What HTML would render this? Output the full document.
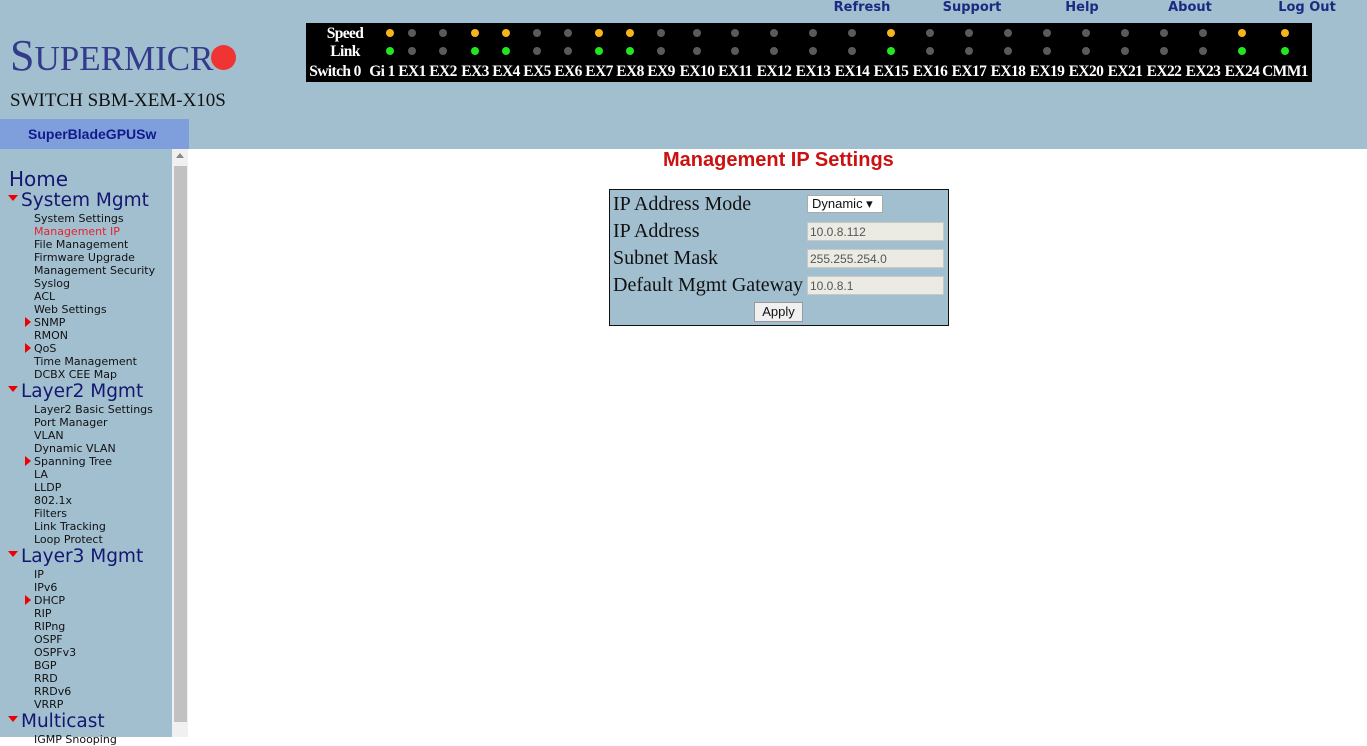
<!DOCTYPE html>
<html><head><meta charset="utf-8"><style>
body{margin:0;width:1367px;height:737px;overflow:hidden;background:#fff;position:relative;font-family:"Liberation Sans",sans-serif}
.a{position:absolute}
#top{left:0;top:0;width:1367px;height:149px;background:#a2bfd0}
#side{left:0;top:149px;width:172px;height:588px;background:#a2bfd0}
#track{left:172px;top:149px;width:16px;height:588px;background:#f0f0f0}
#thumb{left:174px;top:166px;width:13px;height:556px;background:#c1c1c1}
.lnk{top:0;font:bold 13px "DejaVu Sans",sans-serif;color:#1b2a80;transform:translateX(-50%);white-space:nowrap}
#led{left:306px;top:23px;width:1006px;height:59px;background:#000}
.d{width:8px;height:8px;border-radius:50%;margin:-4px 0 0 -4px;background:#5a5a5a}
.o{background:#f9b41a}.g{background:#1ee81e}
.lb{font:bold 15.5px "Liberation Serif",serif;letter-spacing:-0.6px;color:#fff;transform:translateX(-50%);white-space:nowrap;top:63px}
.m{font-family:"DejaVu Sans",sans-serif;white-space:nowrap;color:#111}
.it{left:34px;font-size:11px;line-height:13px}
.h{left:21px;font-size:18.5px;color:#15166f;line-height:22px}
.tri{width:0;height:0;border-left:5px solid transparent;border-right:5px solid transparent;border-top:6px solid #e00;left:8px}
.rt{width:0;height:0;border-top:5px solid transparent;border-bottom:5px solid transparent;border-left:6px solid #e00;left:25px}
.fl{font:20px "Liberation Serif",serif;color:#111;left:613px}
.in{left:807px;width:137px;height:19px;background:#ebebe4;border:1px solid #c8c8c8;font:12px "Liberation Sans",sans-serif;color:#555;line-height:18px;padding-left:2px;box-sizing:border-box}
</style></head><body>
<div id="top" class="a"></div>
<div id="side" class="a"></div>
<div id="track" class="a"></div>
<div id="thumb" class="a"></div>
<div class="a" style="left:176px;top:153px;width:0;height:0;border-left:4px solid transparent;border-right:4px solid transparent;border-bottom:5px solid #888"></div>

<div class="a" style="left:10px;top:31px;font:44px 'Liberation Serif',serif;color:#333b8a;line-height:50px"><span style="font-size:44px">S</span><span style="font-size:35px">UPERMICR</span></div>
<div class="a" style="left:211px;top:45px;width:25px;height:25px;border-radius:50%;background:#f03434"></div>
<div class="a" style="left:10px;top:90px;font:19px 'Liberation Serif',serif;color:#111">SWITCH SBM-XEM-X10S</div>
<div class="a" style="left:0;top:119px;width:189px;height:30px;background:#7f9fdc"></div>
<div class="a" style="left:28px;top:126px;font:bold 14px 'Liberation Sans',sans-serif;color:#121a8a">SuperBladeGPUSw</div>

<div class="a lnk" style="left:862px">Refresh</div>
<div class="a lnk" style="left:972px">Support</div>
<div class="a lnk" style="left:1082px">Help</div>
<div class="a lnk" style="left:1190px">About</div>
<div class="a lnk" style="left:1307px">Log Out</div>

<div id="led" class="a"></div>
<div class="a lb" style="left:345px;top:25px">Speed</div>
<div class="a lb" style="left:345px;top:43px">Link</div>
<div id="leds"></div>
<script>
var xs=[390,412,443,475,506,537,568,599,630,661,697,735,774,813,852,891,930,969,1008,1047,1086,1125,1164,1203,1242,1285];
var nm=["Gi 1"];for(var i=1;i<=24;i++)nm.push("EX"+i);nm.push("CMM1");
var on={0:1,3:1,4:1,7:1,8:1,15:1,24:1,25:1};
var h='<div class="a lb" style="left:335px">Switch 0</div>';
xs.forEach(function(x,i){
 h+='<div class="a d '+(on[i]?'o':'')+'" style="left:'+x+'px;top:33px"></div>';
 h+='<div class="a d '+(on[i]?'g':'')+'" style="left:'+x+'px;top:51px"></div>';
 var lx=x;if(i==0)lx=382;
 h+='<div class="a lb" style="left:'+lx+'px">'+nm[i]+'</div>';
});
document.getElementById('leds').innerHTML=h;
</script>

<div class="a m" style="left:9px;top:167px;font-size:20px;color:#15166f">Home</div>
<div class="a tri" style="top:195px"></div><div class="a m h" style="top:190px">System Mgmt</div>
<div class="a m it" style="top:212px">System Settings<br><span style="color:#e8202a">Management IP</span><br>File Management<br>Firmware Upgrade<br>Management Security<br>Syslog<br>ACL<br>Web Settings<br>SNMP<br>RMON<br>QoS<br>Time Management<br>DCBX CEE Map</div>
<div class="a rt" style="top:317px"></div><div class="a rt" style="top:343px"></div>
<div class="a tri" style="top:386px"></div><div class="a m h" style="top:381px">Layer2 Mgmt</div>
<div class="a m it" style="top:403px">Layer2 Basic Settings<br>Port Manager<br>VLAN<br>Dynamic VLAN<br>Spanning Tree<br>LA<br>LLDP<br>802.1x<br>Filters<br>Link Tracking<br>Loop Protect</div>
<div class="a rt" style="top:456px"></div>
<div class="a tri" style="top:551px"></div><div class="a m h" style="top:546px">Layer3 Mgmt</div>
<div class="a m it" style="top:568px">IP<br>IPv6<br>DHCP<br>RIP<br>RIPng<br>OSPF<br>OSPFv3<br>BGP<br>RRD<br>RRDv6<br>VRRP</div>
<div class="a rt" style="top:595px"></div>
<div class="a tri" style="top:716px"></div><div class="a m h" style="top:711px">Multicast</div>
<div class="a m it" style="top:733px">IGMP Snooping</div>

<div class="a" style="left:663px;top:149px;font:bold 20px 'Liberation Sans',sans-serif;color:#cc1111">Management IP Settings</div>
<div class="a" style="left:609px;top:189px;width:340px;height:137px;background:#a2bfd0;border:1px solid #111;box-sizing:border-box"></div>
<div class="a fl" style="top:193px">IP Address Mode</div>
<div class="a fl" style="top:220px">IP Address</div>
<div class="a fl" style="top:247px">Subnet Mask</div>
<div class="a fl" style="top:274px">Default Mgmt Gateway</div>
<div class="a" style="left:807px;top:195px;width:76px;height:18px;background:#fff;border:1px solid #aaa;box-sizing:border-box;font:13px 'Liberation Sans',sans-serif;line-height:16px;padding-left:4px;color:#111">Dynamic ▾</div>
<div class="a in" style="top:222px">10.0.8.112</div>
<div class="a in" style="top:249px">255.255.254.0</div>
<div class="a in" style="top:276px">10.0.8.1</div>
<div class="a" style="left:754px;top:302px;width:49px;height:20px;background:#f0f0f0;border:1px solid #999;box-sizing:border-box;font:13px 'Liberation Sans',sans-serif;text-align:center;line-height:18px;color:#111">Apply</div>
</body></html>
